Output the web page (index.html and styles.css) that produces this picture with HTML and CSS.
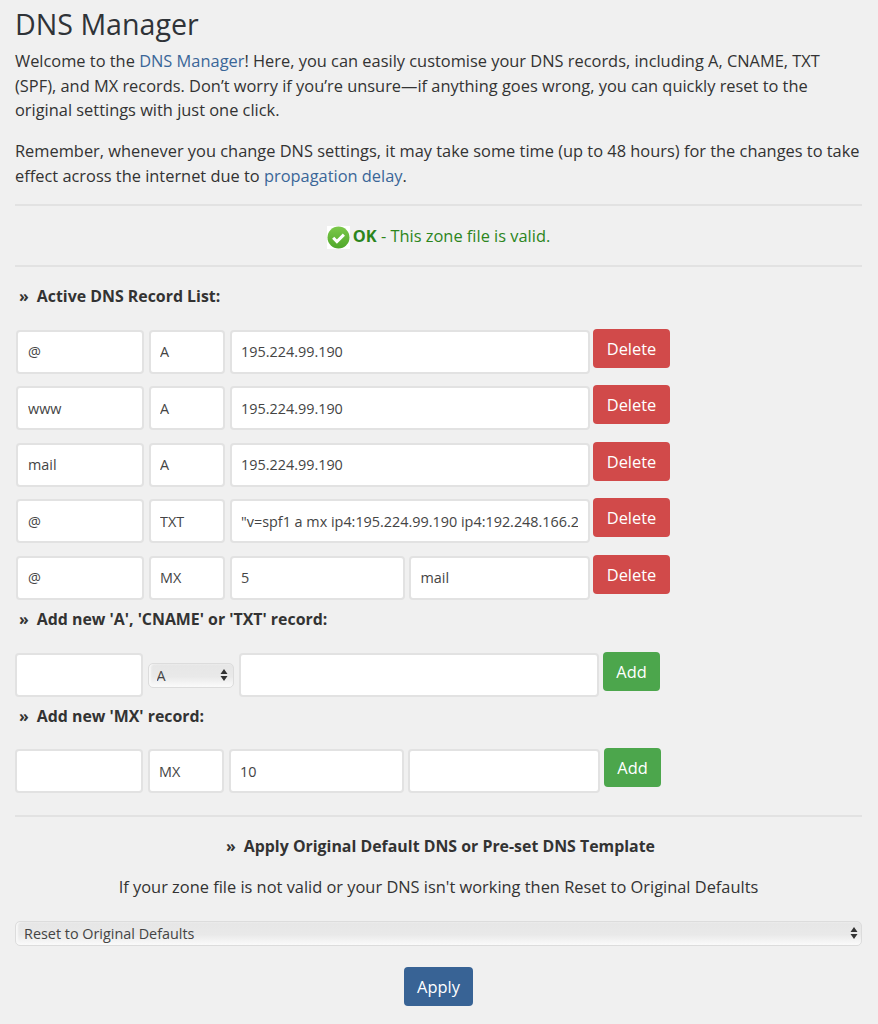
FILE: index.html
```html
<!DOCTYPE html>
<html lang="en">
<head>
<meta charset="utf-8">
<title>DNS Manager</title>
<link rel="stylesheet" href="styles.css">
</head>
<body>
<main class="page">
  <h1 class="title">DNS Manager</h1>
  <p class="para">Welcome to the <a href="#">DNS Manager</a>! Here, you can easily customise your DNS records, including A, CNAME, TXT (SPF), and MX records. Don’t worry if you’re unsure—if anything goes wrong, you can quickly reset to the original settings with just one click.</p>
  <p class="para">Remember, whenever you change DNS settings, it may take some time (up to 48 hours) for the changes to take effect across the internet due to <a href="#">propagation delay</a>.</p>
  <hr class="rule">
  <div class="status">
    <svg class="status-icon" width="23" height="23" viewBox="0 0 23 23" aria-hidden="true">
      <defs><linearGradient id="ok" x1="0" y1="0" x2="0" y2="1"><stop offset="0" stop-color="#7cc84a"/><stop offset="1" stop-color="#4fa82a"/></linearGradient></defs>
      <rect width="23" height="23" fill="#fff"/>
      <circle cx="11.500" cy="11.500" r="11" fill="url(#ok)"/>
      <path d="M6.200 11.800l3.700 3.800 7-7" fill="none" stroke="#fff" stroke-width="3"/>
    </svg>
    <span><strong>OK</strong> - This zone file is valid.</span>
  </div>
  <hr class="rule rule-two">

  <h2 class="section section-active"><span class="mark">»</span>Active DNS Record List:</h2>
  <div class="records">
    <div class="row">
      <input class="field f-name" value="@"><input class="field f-type" value="A"><input class="field f-wide" value="195.224.99.190">
      <button class="btn btn-red">Delete</button>
    </div>
    <div class="row">
      <input class="field f-name" value="www"><input class="field f-type" value="A"><input class="field f-wide" value="195.224.99.190">
      <button class="btn btn-red">Delete</button>
    </div>
    <div class="row">
      <input class="field f-name" value="mail"><input class="field f-type" value="A"><input class="field f-wide" value="195.224.99.190">
      <button class="btn btn-red">Delete</button>
    </div>
    <div class="row">
      <input class="field f-name" value="@"><input class="field f-type" value="TXT"><input class="field f-wide" value="&quot;v=spf1 a mx ip4:195.224.99.190 ip4:192.248.166.2">
      <button class="btn btn-red">Delete</button>
    </div>
    <div class="row">
      <input class="field f-name" value="@"><input class="field f-type" value="MX"><input class="field f-prio" value="5"><input class="field f-target" value="mail">
      <button class="btn btn-red">Delete</button>
    </div>
  </div>

  <h2 class="section section-add"><span class="mark">»</span>Add new 'A', 'CNAME' or 'TXT' record:</h2>
  <div class="row row-add">
    <input class="field f-name" value="">
    <div class="select-wrap select-small">
      <select class="select"><option>A</option><option>CNAME</option><option>TXT</option></select>
      <svg class="updown" width="8" height="12" viewBox="0 0 8 12" aria-hidden="true"><path d="M4 0l3.500 5H.5zM4 12L.5 7h7z" fill="#333"/></svg>
    </div>
    <input class="field f-wide" value="">
    <button class="btn btn-green">Add</button>
  </div>

  <h2 class="section section-mx"><span class="mark">»</span>Add new 'MX' record:</h2>
  <div class="row row-add">
    <input class="field f-name" value=""><input class="field f-type" value="MX"><input class="field f-prio" value="10"><input class="field f-target-wide" value="">
    <button class="btn btn-green">Add</button>
  </div>

  <hr class="rule rule-three">
  <h2 class="section section-center"><span class="mark">»</span>Apply Original Default DNS or Pre-set DNS Template</h2>
  <p class="hint">If your zone file is not valid or your DNS isn't working then Reset to Original Defaults</p>
  <div class="select-wrap select-full">
    <select class="select"><option>Reset to Original Defaults</option></select>
    <svg class="updown" width="8" height="12" viewBox="0 0 8 12" aria-hidden="true"><path d="M4 0l3.500 5H.5zM4 12L.5 7h7z" fill="#333"/></svg>
  </div>
  <div class="apply"><button class="btn btn-blue">Apply</button></div>
</main>
</body>
</html>
```
FILE: styles.css
```css
* { box-sizing: border-box; }
html, body { margin: 0; padding: 0; }
body {
  background: #f0f0f0;
  color: #333;
  font-family: "Open Sans", "Liberation Sans", sans-serif;
  font-size: 16.4px;
  line-height: 24.6px;
  height: 1024px;
  overflow: hidden;
}
.page { padding: 0 16px 0 15px; }
a { color: #3a6698; text-decoration: none; }
.title { margin: 0; padding-top: 4px; height: 49px; font-size: 28.6px; font-weight: 400; line-height: 40px; color: #2f3338; }
.para { margin: 0 0 16.4px; }
.para + .para { margin-bottom: 15.6px; }
.rule { border: 0; border-top: 2px solid #e2e2e2; margin: 0; height: 0; }
.rule-two { margin-top: 12px; }
.rule-three { margin-top: 14px; }
.status { height: 47px; padding-top: 18px; display: flex; justify-content: center; align-items: flex-start; gap: 3px; color: #2c851c; line-height: 24px; }
.status-icon { margin-top: 2px; }
.status strong { font-weight: 700; }
.section { margin: 0; font-size: 15.9px; font-weight: 700; line-height: 24px; color: #333; padding-left: 4px; }
.mark { margin-right: 8px; }
.section-active { margin-top: 17px; }
.records { margin-top: 22px; padding-left: 1px; }
.row { display: flex; align-items: flex-start; gap: 4.5px; height: 56.5px; }
.field, .f-target-wide {
  height: 44px;
  border: 2px solid #e2e2e2;
  border-radius: 4px;
  background: #fff;
  color: #444;
  font: 14.4px "Open Sans", "Liberation Sans", sans-serif;
  padding: 0 10px;
  min-width: 0;
  outline: 0;
}
.f-name { width: 128px; }
.f-type { width: 76.5px; padding: 0 9.5px; }
.f-wide { width: 360px; padding: 0 9.5px; }
.f-prio { width: 175px; padding: 0 9.5px; }
.f-target { width: 180.5px; padding: 0 9.5px; }
.f-target-wide { width: 191.500px; }
.btn {
  border: 1px solid transparent;
  border-radius: 4px;
  color: #fff;
  font: 16.4px "Open Sans", "Liberation Sans", sans-serif;
  height: 39px;
  padding: 0;
}
.row .btn { margin-left: -1px; margin-top: -1px; }
.btn-red { width: 77px; background: #d14a4a; }
.btn-green { width: 57px; background: #4ca64c; }
.btn-blue { width: 69.5px; background: #386395; }
.section-add { margin-top: -5px; }
.row-add { height: 52px; }
.section-add + .row-add { margin-top: 22px; }
.row-add .btn { margin-left: 0; }
.section-mx { margin-top: -1px; }
.section-mx + .row-add { margin-top: 21px; }
.select-wrap { position: relative; }
.select-small { width: 86.5px; margin-top: 10px; }
.select {
  appearance: none;
  -webkit-appearance: none;
  width: 100%;
  height: 25px;
  border: 1px solid #dcdcdc;
  border-radius: 5px;
  background: linear-gradient(#e6e6e6, #e9e9e9 55%, #fbfbfb);
  box-shadow: inset 2px 0 2px #f8f8f8;
  color: #444;
  font: 14.4px "Open Sans", "Liberation Sans", sans-serif;
  padding: 0 20px 0 8px;
  outline: 0;
}
.updown { position: absolute; right: 6px; top: 6px; }
.section-center { text-align: center; margin-top: 17px; padding-left: 4px; }
.hint { margin: 17px 0 0; text-align: center; }
.select-full { margin-top: 21px; }
.select-full .updown { right: 4px; }
.apply { margin-top: 21px; display: flex; justify-content: center; }
```
